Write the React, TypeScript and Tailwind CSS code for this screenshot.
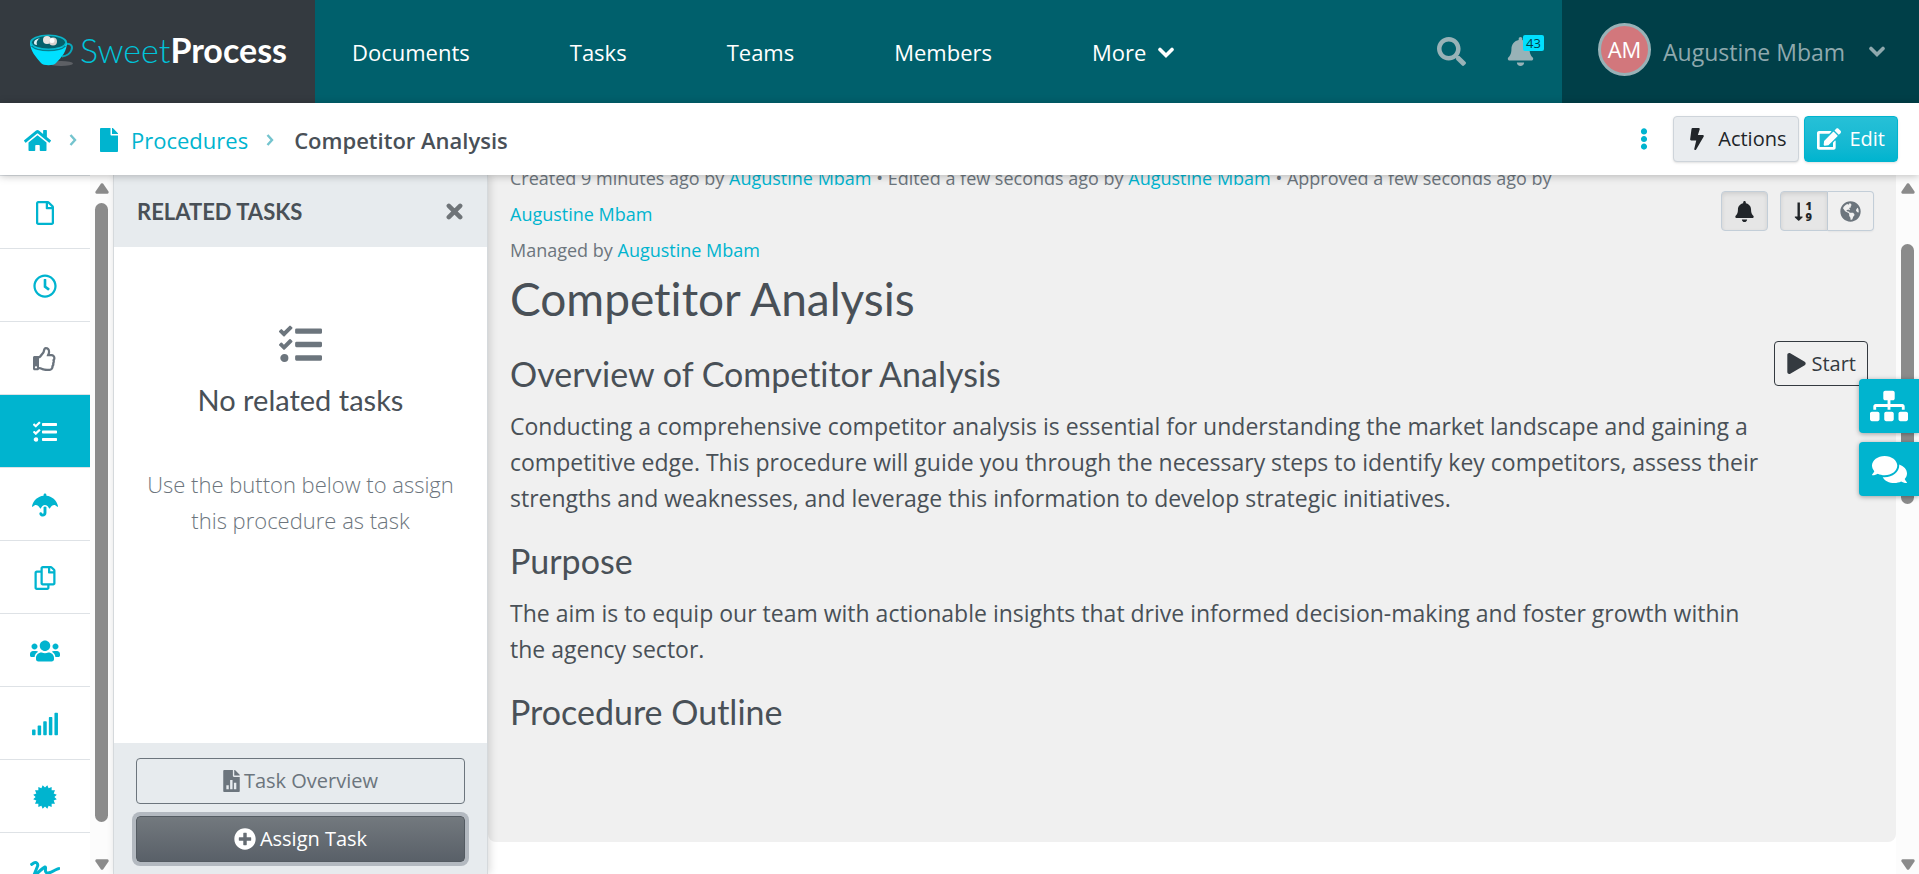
import {
  FaBell,
  FaBolt,
  FaComments,
  FaEdit,
  FaEllipsisV,
  FaFile,
  FaGlobeAmericas,
  FaHome,
  FaPlay,
  FaPlusCircle,
  FaRegClock,
  FaRegCopy,
  FaRegFile,
  FaRegThumbsUp,
  FaSearch,
  FaSignal,
  FaSignature,
  FaSitemap,
  FaTasks,
  FaUmbrella,
  FaUsers,
} from "react-icons/fa"
import type { ReactNode } from "react"

const NAV = ["Documents", "Tasks", "Teams", "Members"]

function CupLogo() {
  return (
    <svg viewBox="0 0 44 32" className="h-8 w-11 shrink-0" aria-hidden="true">
      <ellipse cx="31" cy="29.500" rx="12" ry="2.500" fill="#5d6065" />
      <path d="M35 10c6-1 8 2 6.500 6-1.500 4-5 6-9.500 6.500" fill="none" stroke="#0aa7bb" strokeWidth="2" />
      <path d="M0 8c0 9 6 15 11 21 2 3 13 3 15 0 6-6 11-12 11-21z" fill="#00e0ff" />
      <ellipse cx="18.500" cy="8" rx="18.500" ry="7.500" fill="#0cb4c8" />
      <ellipse cx="18.500" cy="8.300" rx="16.500" ry="6.200" fill="#06606b" />
      <path d="M4 9c0-3 3-4 6-5-3 2-4 4-3 7-2 0-3-1-3-2z" fill="#dff3f5" />
      <path d="M1.500 12c6 6 28 6 34 0" fill="none" stroke="#067f90" strokeWidth="1.300" />
      <circle cx="17" cy="6" r="4" fill="#e9e4e1" />
      <circle cx="23" cy="7.500" r="4" fill="#d9d2cf" />
      <circle cx="22" cy="6.500" r="2.500" fill="#fff" />
    </svg>
  )
}

function SealIcon() {
  const points = Array.from({ length: 32 }, (_, i) => {
    const r = i % 2 ? 9.4 : 12
    const a = ((i + 1) * Math.PI) / 16
    return `${12 + r * Math.sin(a)},${12 - r * Math.cos(a)}`
  }).join(" ")
  return (
    <svg viewBox="0 0 24 24" className="size-6" fill="currentColor" aria-hidden="true">
      <polygon points={points} />
    </svg>
  )
}

function SortNumericIcon() {
  return (
    <svg viewBox="0 0 20 22" className="h-[22px] w-5" fill="currentColor" aria-hidden="true">
      <path d="M3.500 2.500h2.400v14h2.300q.8.200.3 1l-3.200 3.100q-.6.500-1.200 0L.9 17.500q-.5-.8.300-1h2.300z" />
      <text x="11.500" y="10" className="font-['Open_Sans',sans-serif] text-[11px] font-extrabold">
        1
      </text>
      <text x="11.500" y="21" className="font-['Open_Sans',sans-serif] text-[11px] font-extrabold">
        9
      </text>
    </svg>
  )
}

function Chevron() {
  return (
    <svg viewBox="0 0 8 12" className="h-3 w-2 shrink-0" fill="none" stroke="#74c4ce" strokeWidth="2.400" aria-hidden="true">
      <path d="M1.500 1l4.500 5-4.500 5" />
    </svg>
  )
}

function Caret() {
  return (
    <svg viewBox="0 0 16 12" className="h-3 w-4 shrink-0" fill="none" stroke="currentColor" strokeWidth="3.600" aria-hidden="true">
      <path d="M2 2.500l6 6 6-6" strokeLinecap="round" />
    </svg>
  )
}

const RAIL: { label: string; icon: ReactNode; muted?: boolean; active?: boolean }[] = [
  { label: "Document", icon: <FaRegFile size={24} /> },
  { label: "History", icon: <FaRegClock size={24} /> },
  { label: "Approvals", icon: <FaRegThumbsUp size={24} />, muted: true },
  { label: "Related tasks", icon: <FaTasks size={24} />, active: true },
  { label: "Policies", icon: <FaUmbrella size={26} /> },
  { label: "Copies", icon: <FaRegCopy size={24} /> },
  { label: "Teams", icon: <FaUsers size={30} /> },
  { label: "Statistics", icon: <FaSignal size={28} /> },
  { label: "Certification", icon: <SealIcon /> },
  { label: "Sign-off", icon: <FaSignature size={30} /> },
]

function railColor(item: (typeof RAIL)[number]) {
  if (item.active) return "bg-[#00b4cf] text-white"
  return item.muted ? "bg-white text-[#6a737d]" : "bg-white text-[#00b4cf]"
}

// Static scrollbar: arrows at both ends, thumb placed by the spacer above it.
function ScrollTrack({ spacer, thumb }: { spacer: string; thumb: string }) {
  return (
    <div className="flex w-[23px] shrink-0 flex-col items-center bg-[#fcfcfc] pt-2 pb-1" aria-hidden="true">
      <svg viewBox="0 0 14 11" className="h-[11px] w-[14px] shrink-0" fill="#8b8b8b">
        <path d="M6 .6q1-.9 2 0l5.500 8q.6 1.900-1 2.200h-11q-1.600-.3-1-2.200z" />
      </svg>
      <div className={spacer} />
      <div className={`w-[13px] rounded-full bg-[#8b8b8b] ${thumb}`} />
      <div className="grow" />
      <svg viewBox="0 0 14 11" className="h-[11px] w-[14px] shrink-0" fill="#8b8b8b">
        <path d="M6 10.400q1 .9 2 0l5.500-8q.6-1.900-1-2.200h-11q-1.600.3-1 2.200z" />
      </svg>
    </div>
  )
}

function Person() {
  return (
    <a href="#" className="text-[#00b4cf]">
      Augustine Mbam
    </a>
  )
}

function Heading({ children }: { children: ReactNode }) {
  return <h2 className="mt-[23px] mb-[13px] font-['Lato',sans-serif] text-[34px] leading-[43px] text-[#495057]">{children}</h2>
}

function TopBar() {
  return (
    <header className="flex h-[103px] shrink-0 bg-[#00606c] text-[22px] text-white">
      <a href="#" className="flex w-[315px] shrink-0 items-center gap-[6px] bg-[#343a40] pb-1 pl-[30px]">
        <CupLogo />
        <span className="font-['Lato',sans-serif] text-[34px] leading-none">
          <span className="font-light text-[#00c3d9]">Sweet</span>
          <span className="font-bold">Process</span>
        </span>
      </a>
      <nav className="flex grow items-center gap-[100px] pt-[2px] pl-[37px]">
        {NAV.map((label) => (
          <a key={label} href="#">
            {label}
          </a>
        ))}
        <button className="flex items-center gap-3">
          More <Caret />
        </button>
      </nav>
      <div className="flex items-center gap-10 pr-[27px] text-[#98b2b7]">
        <button aria-label="Search">
          <FaSearch size={29} />
        </button>
        <button aria-label="Notifications" className="relative">
          <FaBell size={29} />
          <span className="absolute -top-0.5 left-[17px] rounded-xs bg-[#00e0ff] px-[3px] text-[13px] leading-4 text-[#00404a]">
            43
          </span>
        </button>
      </div>
      <button className="flex w-[357px] shrink-0 items-center bg-[#003f48] pr-[34px] pl-9 text-[#8fa9ae]">
        <span className="mb-[5px] flex size-[53px] items-center justify-center rounded-full border-[3px] border-[#98b2b7] bg-[#d2777c] text-white">
          AM
        </span>
        <span className="ml-3 grow pt-[2px] text-left text-[23px]">Augustine Mbam</span>
        <Caret />
      </button>
    </header>
  )
}

function Breadcrumbs() {
  return (
    <div className="relative z-10 flex h-[72px] shrink-0 items-center bg-white pr-[21px] pl-6 text-[22px] shadow-[0_1px_8px_rgba(0,0,0,0.25)]">
      <nav className="flex grow items-center pt-[2px] text-[#00b4cf]" aria-label="Breadcrumb">
        <a href="#" aria-label="Home">
          <FaHome size={27} />
        </a>
        <span className="mr-5 ml-[18px]">
          <Chevron />
        </span>
        <a href="#" className="flex items-center gap-[10px]">
          <FaFile size={24} />
          Procedures
        </a>
        <span className="mr-5 ml-[18px]">
          <Chevron />
        </span>
        <span className="font-semibold text-[#495057]">Competitor Analysis</span>
      </nav>
      <button aria-label="More options" className="mr-[18px] text-[#00b4cf]">
        <FaEllipsisV size={22} />
      </button>
      <button className="mr-[5px] flex h-[46px] items-center gap-[10px] rounded border border-[#ced4da] bg-[#e9ecef] px-3 text-[20px] text-[#212529] shadow-sm">
        <FaBolt size={22} />
        Actions
      </button>
      <button className="flex h-[46px] items-center gap-2 rounded border border-[#00b4cf] bg-linear-to-b from-[#26c0d7] to-[#00b4cf] px-3 text-[20px] text-white shadow-sm">
        <FaEdit size={24} />
        Edit
      </button>
    </div>
  )
}

function TasksPanel() {
  return (
    <aside className="z-1 flex w-[375px] shrink-0 flex-col border-x border-[#d5d9dc] bg-white shadow-[2px_0_8px_rgba(0,0,0,0.15)]">
      <div className="flex h-[72px] shrink-0 items-center justify-between bg-[#e7ebee] pr-6 pl-[23px]">
        <h2 className="font-['Lato',sans-serif] text-[22px] font-bold text-[#495057]">RELATED TASKS</h2>
        <button aria-label="Close" className="text-[#6f7478]">
          <svg viewBox="0 0 18 18" className="size-[17px]" stroke="currentColor" strokeWidth="4.800" aria-hidden="true">
            <path d="M3 3l12 12M15 3L3 15" strokeLinecap="round" />
          </svg>
        </button>
      </div>
      <div className="flex grow flex-col items-center px-6 pt-[76px] text-center">
        <FaTasks size={43} className="text-[#6c757d]" />
        <h3 className="mt-[14px] font-['Lato',sans-serif] text-[29px] leading-10 text-[#495057]">No related tasks</h3>
        <p className="mt-[46px] text-[22px] leading-9 font-light text-[#6c757d]">
          Use the button below to assign this procedure as task
        </p>
      </div>
      <div className="flex shrink-0 flex-col gap-3 bg-[#e7ebee] px-[22px] pt-[15px] pb-3 text-[20px]">
        <button className="flex h-[46px] items-center justify-center gap-1 rounded border border-[#6c757d] text-[#6c757d]">
          <svg viewBox="0 0 384 512" className="h-[22px] w-[17px]" fill="currentColor" aria-hidden="true">
            <path
              fillRule="evenodd"
              d="M224 136V0H24C11 0 0 11 0 24v464c0 13 11 24 24 24h336c13 0 24-11 24-24V160H248c-13 0-24-11-24-24zM72 448v-92h56v92zm88 0V232h56v216zm88 0V296h56v152zM377 105L279 7c-4-4-10-7-17-7h-6v128h128v-6c0-6-3-12-7-17z"
            />
          </svg>
          Task Overview
        </button>
        <button className="flex h-[46px] items-center justify-center gap-1 rounded border border-[#545b62] bg-linear-to-b from-[#73797e] to-[#596068] text-white ring-4 ring-[#b3b9c0]">
          <FaPlusCircle size={22} />
          Assign Task
        </button>
      </div>
    </aside>
  )
}

function Procedure() {
  return (
    <div className="min-w-0 grow overflow-hidden bg-white">
      <article className="-mt-[15px] flex h-[682px] items-start justify-between rounded-lg bg-[#f0f0f0] px-[22px] text-[#495057]">
        <div className="max-w-[1256px] grow text-[23px] leading-9">
          <div className="max-w-[1110px] text-[18px] text-[#6c757d]">
            <p>
              Created 9 minutes ago by <Person /> • Edited a few seconds ago by <Person /> • Approved a few seconds ago
              by <Person />
            </p>
            <p>
              Managed by <Person />
            </p>
          </div>
          <h1 className="mt-px font-['Lato',sans-serif] text-[46px] leading-[60px]">Competitor Analysis</h1>
          <Heading>Overview of Competitor Analysis</Heading>
          <p>
            Conducting a comprehensive competitor analysis is essential for understanding the market landscape and
            gaining a competitive edge. This procedure will guide you through the necessary steps to identify key
            competitors, assess their strengths and weaknesses, and leverage this information to develop strategic
            initiatives.
          </p>
          <Heading>Purpose</Heading>
          <p>
            The aim is to equip our team with actionable insights that drive informed decision-making and foster growth
            within the agency sector.
          </p>
          <Heading>Procedure Outline</Heading>
        </div>
        <div className="-ml-16 flex shrink-0 flex-col items-end pt-[31px]">
          <div className="flex gap-3">
            <button
              aria-label="Notify me"
              className="flex h-10 w-[47px] items-center justify-center rounded border border-[#c3ced8] bg-[#e6e6e6] text-[#212529] shadow-[inset_0_2px_4px_rgba(0,0,0,0.1)]"
            >
              <FaBell size={21} />
            </button>
            <div className="flex">
              <button
                aria-label="Numbered steps"
                className="flex h-10 w-12 items-center justify-center rounded-l border border-[#c3ced8] bg-[#e6e6e6] text-[#212529] shadow-[inset_0_2px_4px_rgba(0,0,0,0.1)]"
              >
                <SortNumericIcon />
              </button>
              <button
                aria-label="Public access"
                className="flex h-10 w-[46px] items-center justify-center rounded-r border border-l-0 border-[#c3ced8] text-[#6c757d] shadow-xs"
              >
                <FaGlobeAmericas size={21} />
              </button>
            </div>
          </div>
          <button className="mt-[110px] mr-[6px] flex h-[45px] items-center gap-1 rounded border border-[#343a40] px-[11px] text-[20px] text-[#343a40]">
            <FaPlay size={21} />
            Start
          </button>
        </div>
      </article>
    </div>
  )
}

export default function App() {
  return (
    <div className="flex h-screen flex-col overflow-hidden bg-white font-['Open_Sans','Noto_Sans',sans-serif] [font-variant-ligatures:none]">
      <TopBar />
      <Breadcrumbs />
      <main className="relative flex min-h-0 grow">
        <nav className="flex w-[90px] shrink-0 flex-col overflow-hidden border-t border-[#dee2e6]" aria-label="Procedure sections">
          {RAIL.map((item) => (
            <a
              key={item.label}
              href="#"
              aria-label={item.label}
              className={`flex h-[73px] shrink-0 items-center justify-center border-b border-[#dee2e6] pt-[2px] ${railColor(item)}`}
            >
              {item.icon}
            </a>
          ))}
        </nav>
        <ScrollTrack spacer="h-[9px]" thumb="h-[619px]" />
        <TasksPanel />
        <Procedure />
        <ScrollTrack spacer="h-[50px]" thumb="h-[260px]" />
        <div className="absolute top-[204px] right-0 z-10 flex flex-col gap-[9px] text-white">
          <button
            aria-label="Process map"
            className="flex h-[54px] w-[60px] items-center justify-center rounded-l bg-[#00b4cf] shadow-[0_1px_5px_rgba(0,0,0,0.35)]"
          >
            <FaSitemap size={38} />
          </button>
          <button
            aria-label="Comments"
            className="flex h-[54px] w-[60px] items-center justify-center rounded-l bg-[#00b4cf] shadow-[0_1px_5px_rgba(0,0,0,0.35)]"
          >
            <FaComments size={35} />
          </button>
        </div>
      </main>
    </div>
  )
}
